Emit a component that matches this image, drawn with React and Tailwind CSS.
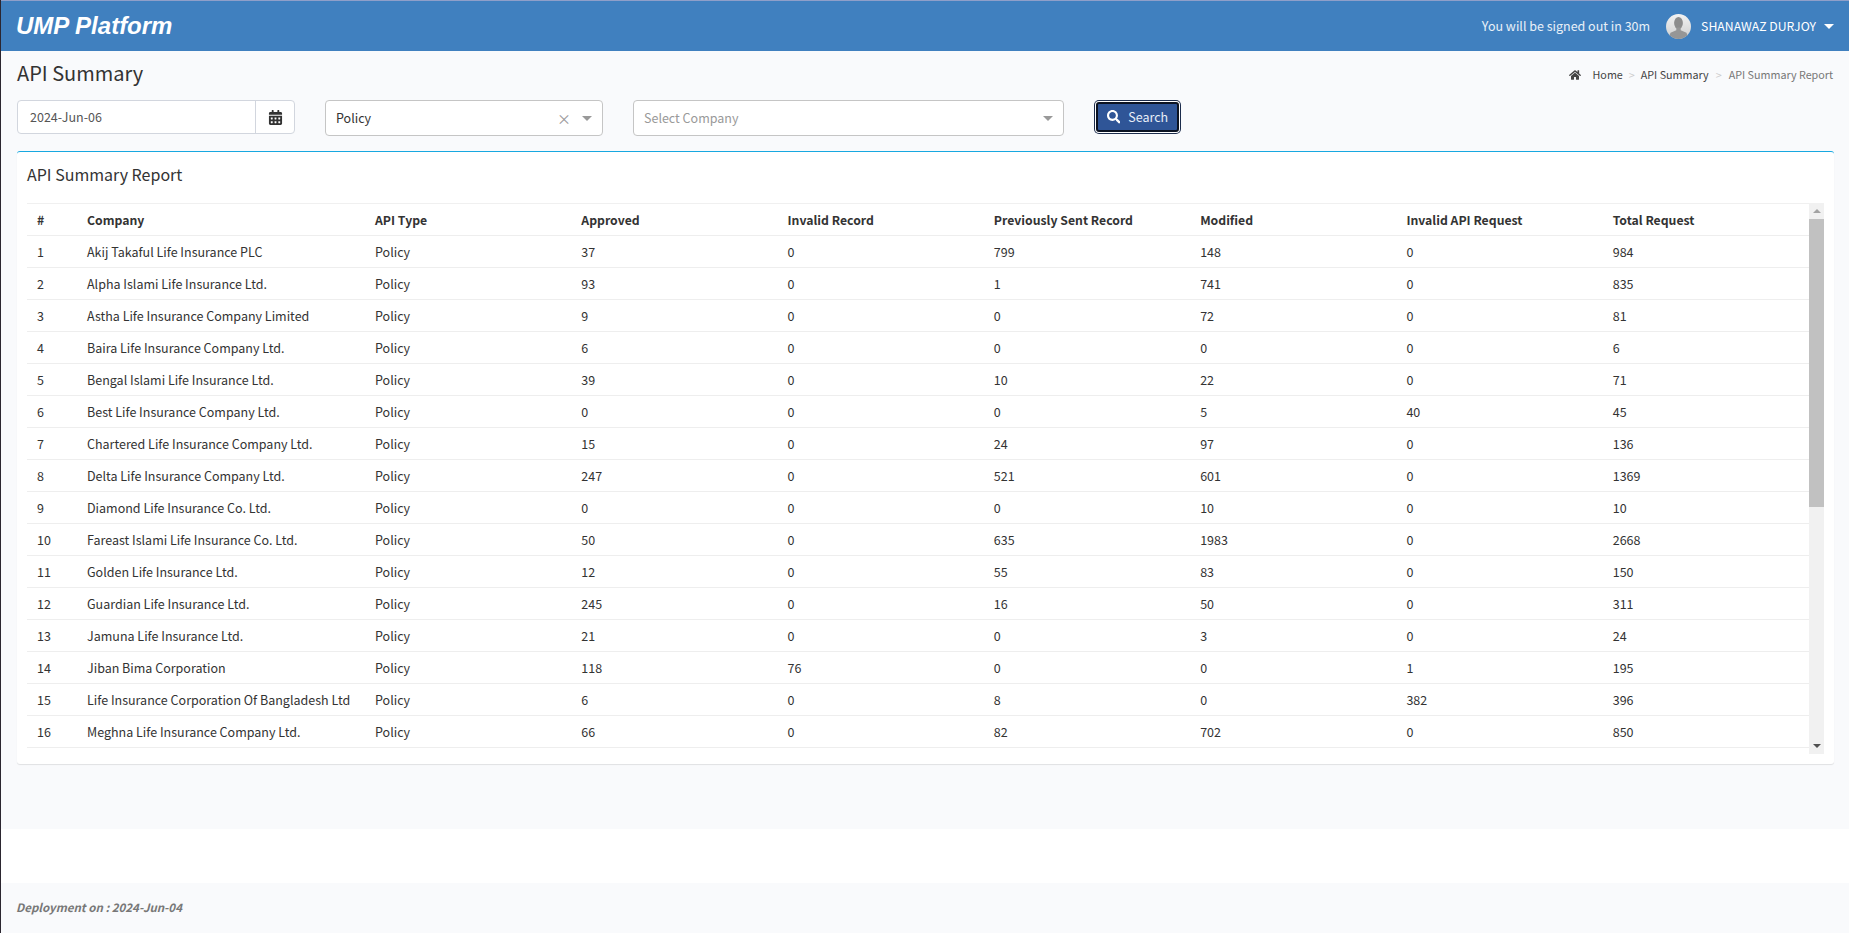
import { FaCalendarAlt, FaHome, FaSearch } from 'react-icons/fa'

const HEADERS = ['#', 'Company', 'API Type', 'Approved', 'Invalid Record', 'Previously Sent Record', 'Modified', 'Invalid API Request', 'Total Request']

const ROWS = [
  ['Akij Takaful Life Insurance PLC', 37, 0, 799, 148, 0, 984],
  ['Alpha Islami Life Insurance Ltd.', 93, 0, 1, 741, 0, 835],
  ['Astha Life Insurance Company Limited', 9, 0, 0, 72, 0, 81],
  ['Baira Life Insurance Company Ltd.', 6, 0, 0, 0, 0, 6],
  ['Bengal Islami Life Insurance Ltd.', 39, 0, 10, 22, 0, 71],
  ['Best Life Insurance Company Ltd.', 0, 0, 0, 5, 40, 45],
  ['Chartered Life Insurance Company Ltd.', 15, 0, 24, 97, 0, 136],
  ['Delta Life Insurance Company Ltd.', 247, 0, 521, 601, 0, 1369],
  ['Diamond Life Insurance Co. Ltd.', 0, 0, 0, 10, 0, 10],
  ['Fareast Islami Life Insurance Co. Ltd.', 50, 0, 635, 1983, 0, 2668],
  ['Golden Life Insurance Ltd.', 12, 0, 55, 83, 0, 150],
  ['Guardian Life Insurance Ltd.', 245, 0, 16, 50, 0, 311],
  ['Jamuna Life Insurance Ltd.', 21, 0, 0, 3, 0, 24],
  ['Jiban Bima Corporation', 118, 76, 0, 0, 1, 195],
  ['Life Insurance Corporation Of Bangladesh Ltd', 6, 0, 8, 0, 382, 396],
  ['Meghna Life Insurance Company Ltd.', 66, 0, 82, 702, 0, 850],
]

function Caret({ className }) {
  return <span className={`inline-block h-0 w-0 border-x-[5px] border-t-[5px] border-x-transparent ${className}`} />
}

function Avatar() {
  return (
    <svg viewBox="0 0 25 25" className="h-[25px] w-[25px] rounded-full">
      <defs>
        <linearGradient id="avatarBg" x1="0" y1="0" x2="0" y2="1">
          <stop offset="0" stopColor="#f2f2f2" />
          <stop offset="1" stopColor="#cfcfcf" />
        </linearGradient>
      </defs>
      <rect width="25" height="25" fill="url(#avatarBg)" />
      <ellipse cx="12.5" cy="9" rx="4.4" ry="6" fill="#8c8c8c" />
      <path d="M10.300 13.500v2.700L4.500 18.700 2 25h21l-2.500-6.300-5.800-2.500v-2.700z" fill="#969696" />
    </svg>
  )
}

export default function App() {
  return (
    <div className="min-h-[933px] border-l border-[#2b2630] bg-white font-['Noto_Sans_CJK_SC',sans-serif] text-[12.5px] text-[#333]">
      <header className="flex h-[51px] items-center justify-between border-t border-[#8f9fc9] bg-[#4080bf] pl-[15px] pr-[15px] text-white">
        <span className="font-['Liberation_Sans',sans-serif] text-[24px] font-bold italic leading-none">UMP Platform</span>
        <div className="flex items-center text-[12.5px]">
          <span className="text-[#e8f0f8]">You will be signed out in 30m</span>
          <span className="ml-4 flex"><Avatar /></span>
          <span className="ml-[10px] text-[12.25px]">SHANAWAZ DURJOY</span>
          <Caret className="ml-[8px] border-x-[4px] border-t-[4px] border-t-white" />
        </div>
      </header>

      <main className="h-[778px] bg-[#f9fafc] pl-4 pr-[15px]">
        <div className="flex h-[49px] items-start justify-between">
          <h1 className="mt-[10px] text-[20px] font-normal leading-[24px]">API Summary</h1>
          <nav className="mt-[16px] flex items-center pr-[1px] text-[10.75px] leading-4 text-[#444]">
            <FaHome className="mr-[12px] text-[12px]" />
            <span>Home</span>
            <span className="mx-[6px] text-[#ccc]">&gt;</span>
            <span>API Summary</span>
            <span className="mx-[7px] text-[#ccc]">&gt;</span>
            <span className="text-[#777]">API Summary Report</span>
          </nav>
        </div>

        <div className="flex items-start">
          <div className="flex h-[34px] w-[278px] rounded border border-[#d2d6de] bg-white">
            <span className="flex flex-1 items-center pl-3 text-[#555]">2024-Jun-06</span>
            <span className="flex w-[39px] items-center justify-center border-l border-[#d2d6de]">
              <FaCalendarAlt className="text-[15px] text-[#333]" />
            </span>
          </div>

          <div className="ml-[30px] flex h-[36px] w-[278px] items-center rounded border border-[#c5c5c5] bg-white pl-[10px] pr-[10px]">
            <span className="flex-1">Policy</span>
            <span className="mr-[11px] text-[14px] leading-none text-[#999]">×</span>
            <Caret className="border-t-[#999]" />
          </div>

          <div className="ml-[30px] flex h-[36px] w-[431px] items-center rounded border border-[#c5c5c5] bg-white pl-[10px] pr-[10px]">
            <span className="flex-1 text-[#999]">Select Company</span>
            <Caret className="border-t-[#999]" />
          </div>

          <button className="mt-[2px] ml-[32px] flex h-[30px] w-[83px] items-center justify-center rounded-[3px] border-2 border-[#0c1322] bg-[#2f5597] text-[#e8eef8] shadow-[0_0_0_1px_#fff,0_0_0_2px_#1c2c4c]">
            <FaSearch className="mr-[8px] text-[13.5px] text-white" />
            Search
          </button>
        </div>

        <section className="mt-[15px] h-[613px] rounded-[3px] border-t border-[#18a8e0] bg-white pl-[10px] pr-[10px] shadow-[0_1px_1px_rgba(0,0,0,0.1)]">
          <h2 className="flex h-[51px] items-center pb-[7px] text-[16px] font-normal">API Summary Report</h2>
          <div className="flex h-[551px]">
            <table className="h-fit w-[1782px] table-fixed border-collapse border-t border-[#f0f0f0]">
              <colgroup>
                <col className="w-[50px]" />
                <col className="w-[288px]" />
                <col />
                <col />
                <col />
                <col />
                <col />
                <col />
                <col />
              </colgroup>
              <thead>
                <tr className="h-[32px] border-b border-[#eee]">
                  {HEADERS.map((h) => (
                    <th key={h} className="px-[10px] pt-[2px] text-left text-[12.25px] font-semibold">{h}</th>
                  ))}
                </tr>
              </thead>
              <tbody>
                {ROWS.map((r, i) => (
                  <tr key={r[0]} className="h-[32px] border-b border-[#eee]">
                    <td className="px-[10px] pt-[2px]">{i + 1}</td>
                    <td className="px-[10px] pt-[2px]">{r[0]}</td>
                    <td className="px-[10px] pt-[2px]">Policy</td>
                    {r.slice(1).map((v, j) => (
                      <td key={j} className="px-[10px] pt-[2px]">{v}</td>
                    ))}
                  </tr>
                ))}
              </tbody>
            </table>
            <div className="flex w-[15px] flex-col items-center bg-[#f1f1f1]">
              <span className="mt-[6px] h-0 w-0 border-x-[4px] border-b-[4px] border-x-transparent border-b-[#a3a3a3]" />
              <span className="mt-[6px] h-[288px] w-full bg-[#c1c1c1]" />
              <span className="mt-auto mb-[6px] h-0 w-0 border-x-[4px] border-t-[4px] border-x-transparent border-t-[#505050]" />
            </div>
          </div>
        </section>
      </main>

      <div className="h-[54px] bg-white" />

      <footer className="flex h-[50px] items-center bg-[#f9fafc] pl-[15px] text-[11.5px] font-semibold italic text-[#777]">
        Deployment on : 2024-Jun-04
      </footer>
    </div>
  )
}
